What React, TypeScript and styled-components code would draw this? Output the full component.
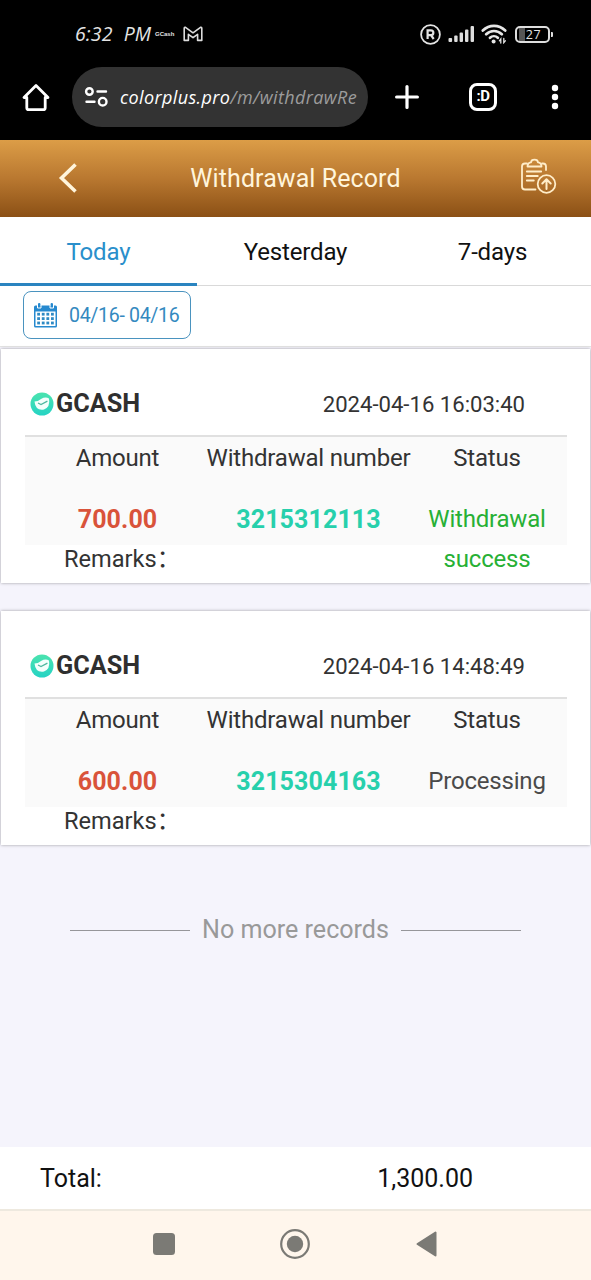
import React from "react";
import styled, { createGlobalStyle } from "styled-components";

const GlobalStyle = createGlobalStyle`
  * { box-sizing: border-box; }
  html, body { margin: 0; padding: 0; }
  body { font-family: Roboto, "Noto Sans CJK SC", sans-serif; background: #f5f4fc; }
`;

const Screen = styled.div`
  width: 591px;
  height: 1280px;
  display: flex;
  flex-direction: column;
  overflow: hidden;
  background: #f5f4fc;
  color: #333;
`;

const BrowserTop = styled.div`
  flex: none;
  height: 140px;
  background: #000;
  color: #fff;
  font-family: "Open Sans", sans-serif;
  font-style: italic;
`;

const StatusBar = styled.div`
  height: 67px;
  padding: 1px 41px 0 75px;
  display: flex;
  align-items: center;
  color: #e4e4e4;
`;

const Clock = styled.span`
  width: 80px;
  padding-bottom: 2px;
  font-size: 19.5px;
  letter-spacing: 0.1px;
  font-weight: 400;
  word-spacing: 6px;
  white-space: nowrap;
`;

const Notice = styled.span`
  width: 28px;
  font: 700 6px "Liberation Sans", sans-serif;
`;

const StatusIcons = styled.div`
  margin-left: auto;
  display: flex;
  align-items: center;
`;

const AddressRow = styled.div`
  height: 60px;
  display: flex;
  align-items: center;
  padding-left: 20px;
`;

const AddressPill = styled.div`
  width: 296px;
  height: 60px;
  margin-left: 20px;
  padding-left: 12px;
  border-radius: 30px;
  background: #333;
  display: flex;
  align-items: center;
`;

const Address = styled.span`
  margin-left: 12px;
  font-size: 18px;
  letter-spacing: 0.38px;
  white-space: nowrap;
  color: #9c9c9c;
`;

const Host = styled.span`
  color: #fff;
`;

const BrowserAction = styled.div<{ $gap: number }>`
  margin-left: ${(p) => p.$gap}px;
  display: flex;
`;

const Header = styled.header`
  flex: none;
  height: 77px;
  background: linear-gradient(#dc9d47, #b97830 50%, #8b5015);
  color: #fff5dc;
  display: grid;
  grid-template-columns: 100px 1fr 100px;
  align-items: center;
`;

const BackButton = styled.div`
  display: flex;
  padding: 0 0 2px 57px;
`;

const ExportButton = styled.div`
  display: flex;
  padding: 0 0 6px 28px;
`;

const Title = styled.h1`
  margin: 0;
  font-size: 25px;
  letter-spacing: 0.08px;
  line-height: 30px;
  font-weight: 400;
  text-align: center;
`;

const Tabs = styled.nav`
  flex: none;
  height: 69px;
  display: flex;
  background: #fff;
  border-bottom: 1px solid #d9d9d9;
`;

const Tab = styled.div<{ $active?: boolean }>`
  flex: 1;
  height: 69px;
  padding-bottom: ${(p) => (p.$active ? 0 : 3)}px;
  padding-top: 3px;
  display: flex;
  align-items: center;
  justify-content: center;
  font-size: 24px;
  letter-spacing: -0.15px;
  color: ${(p) => (p.$active ? "#2a8fcb" : "#111")};
  border-bottom: ${(p) => (p.$active ? "3px solid #2a84c0" : "none")};
`;

const FilterBar = styled.div`
  flex: none;
  height: 61px;
  padding: 5px 23px 0;
  background: #fff;
  border-bottom: 1px solid #e4e4e4;
`;

const DateButton = styled.div`
  width: 168px;
  height: 48px;
  padding-left: 10px;
  border: 1.5px solid #4a93bf;
  border-radius: 8px;
  display: flex;
  align-items: center;
  gap: 12px;
  font-size: 19.5px;
  letter-spacing: -0.3px;
  white-space: nowrap;
  color: #3489bf;
`;

const Records = styled.main`
  flex: 1;
  padding-top: 2px;
`;

const Card = styled.section`
  height: 234px;
  margin: 0 1px 28px;
  padding: 0 23px 0 24px;
  background: #fff;
  box-shadow: 0 0 3px rgba(0, 0, 0, 0.36);
`;

const CardHead = styled.div`
  height: 88px;
  padding: 23px 42px 0 5px;
  display: flex;
  align-items: center;
  border-bottom: 2px solid #e0e0e0;
`;

const Method = styled.span`
  margin: 0 0 0 2px;
  font-size: 25.3px;
  font-weight: 700;
  color: #2f2f2f;
`;

const Time = styled.span`
  margin-left: auto;
  font-size: 22.1px;
`;

const Columns = styled.div`
  height: 108px;
  background: #fafafa;
  display: grid;
  grid-template-columns: 185px 197px 160px;
  grid-template-rows: 44px 40px;
  row-gap: 18px;
  justify-items: center;
  text-align: center;
  font-size: 24px;
  letter-spacing: -0.2px;
  line-height: 40px;
`;

const Label = styled.div`
  padding-top: 1px;
  white-space: nowrap;
`;

const Value = styled.div<{ $color: string; $bold?: boolean }>`
  color: ${(p) => p.$color};
  font-weight: ${(p) => (p.$bold ? 700 : 400)};
  font-size: ${(p) => (p.$bold ? "25px" : "24px")};
  letter-spacing: ${(p) => (p.$bold ? "0.1px" : "-0.2px")};
  padding-top: ${(p) => (p.$bold ? 1 : 0)}px;
`;

const Remarks = styled.div`
  padding-left: 39px;
  font-size: 23.6px;
  line-height: 28px;
`;

const EndNote = styled.div`
  display: flex;
  align-items: center;
  justify-content: center;
  gap: 12px;
  padding-top: 42px;
  font-size: 25.1px;
  line-height: 30px;
  color: #999;
`;

const Rule = styled.span`
  width: 120px;
  height: 1px;
  margin-top: 1px;
  background: #96969a;
`;

const TotalBar = styled.footer`
  flex: none;
  height: 62px;
  padding: 0 118px 0 40px;
  display: flex;
  align-items: center;
  justify-content: space-between;
  background: #fff;
  color: #111;
  font-size: 25px;
`;

const SystemNav = styled.div`
  flex: none;
  height: 71px;
  border-top: 2px solid #eee9df;
  background: #fff6ec;
  display: flex;
  align-items: center;
  padding: 0 0 3px 153px;
  gap: 105px;
`;

const MailIcon = () => (
  <svg width="20" height="16" viewBox="0 0 20 16" fill="none" stroke="#dcdcdc" strokeWidth="1.6" strokeLinejoin="round">
    <path d="M1.2 14.4V2.4Q1.200 1 2.500 1.300L10 6.800l7.500-5.500q1.300-.3 1.300 1.100v12H14.600V8.300L10 11.700 5.400 8.300v6.100Z" />
  </svg>
);

const RegisteredIcon = () => (
  <svg width="21" height="21" viewBox="0 0 21 21" fill="none" stroke="#e4e4e4">
    <circle cx="10.5" cy="10.5" r="9.4" strokeWidth="1.8" />
    <path d="M7.6 15V6.3h3.3a2.4 2.4 0 0 1 0 4.9H7.6M11 11.2l2.7 3.8" strokeWidth="2.2" />
  </svg>
);

const SignalIcon = () => (
  <svg width="27" height="18" viewBox="0 0 27 18" fill="#dedede">
    <rect x="0.5" y="13" width="3.6" height="4" rx="1" />
    <rect x="6.2" y="10.5" width="3.4" height="6.5" rx="1" />
    <rect x="11.6" y="7.5" width="3.4" height="9.5" rx="1" />
    <rect x="17" y="4.5" width="3.4" height="12.5" rx="1" />
    <rect x="22.6" y="1" width="3.4" height="16" rx="1" />
  </svg>
);

const WifiIcon = () => (
  <svg width="26" height="20" viewBox="0 0 26 20" fill="none" stroke="#e6e6e6" strokeWidth="2.7" strokeLinecap="round">
    <path d="M1.8 6.6c6.5-6.2 15.9-6.2 22.4 0M5.2 10.3c4.4-4.4 11.2-4.4 15.6 0M9 13.8c2.2-2.1 5.6-2.1 7.8 0" />
    <circle cx="12.6" cy="17.4" r="2" fill="#e6e6e6" stroke="none" />
    <path d="M19.8 19v-4l-1.400 1.800M22.800 14.400v4.200l1.500-1.800" strokeWidth="1.3" />
  </svg>
);

const BatteryShell = styled.div`
  position: relative;
  width: 35px;
  height: 17px;
  border: 2px solid #dedede;
  border-radius: 5px;
  background: linear-gradient(90deg, transparent 2px, #555 2px, #555 8px, transparent 8px);
  font: 400 12.5px/13px "Open Sans", sans-serif;
  text-align: center;
  padding-left: 2px;
  letter-spacing: 0.6px;
  &::after {
    content: "";
    position: absolute;
    right: -5px;
    top: 4px;
    width: 2px;
    height: 5px;
    border-radius: 0 1px 1px 0;
    background: #dedede;
  }
`;

const HomeIcon = () => (
  <svg width="32" height="32" viewBox="0 0 32 32" fill="none" stroke="#fff" strokeWidth="2.8" strokeLinejoin="round" strokeLinecap="round">
    <path d="M4 16.5h2.8v10.2q0 2 2 2h14.4q2 0 2-2V16.5H28L16 4.5Z" />
  </svg>
);

const SiteInfoIcon = () => (
  <svg width="24" height="22" viewBox="0 0 24 22" fill="none" stroke="#fff" strokeWidth="2.4" strokeLinecap="round">
    <circle cx="5.4" cy="5.500" r="3.300" />
    <path d="M13.5 5.500H22M2.500 15.700h8" />
    <circle cx="18.700" cy="15.700" r="3.800" />
  </svg>
);

const PlusIcon = () => (
  <svg width="24" height="24" viewBox="0 0 24 24" stroke="#fff" strokeWidth="3.2" strokeLinecap="round">
    <path d="M12 1.6v20.8M1.6 12h20.8" />
  </svg>
);

const TabCounter = styled.div`
  width: 28px;
  height: 28px;
  border: 3px solid #fff;
  border-radius: 8px;
  font: 700 15px/21px "Liberation Sans Narrow", Roboto, sans-serif;
  letter-spacing: -0.5px;
  text-align: center;
`;

const MenuIcon = () => (
  <svg width="8" height="26" viewBox="0 0 8 26" fill="#fff">
    <circle cx="4" cy="4" r="3.2" />
    <circle cx="4" cy="13" r="3.2" />
    <circle cx="4" cy="22" r="3.2" />
  </svg>
);

const BackIcon = () => (
  <svg width="22" height="32" viewBox="0 0 22 32" fill="none" stroke="#fff5dc" strokeWidth="3.6">
    <path d="M18.500 2.500 4.500 16l14 13.500" />
  </svg>
);

const ClipboardIcon = () => (
  <svg width="38" height="38" viewBox="0 0 38 38" fill="none" stroke="#ffedc9" strokeWidth="1.8" strokeLinecap="round" strokeLinejoin="round">
    <path d="M8 6.500H6Q3 6.500 3 9.500V29.500q0 3 3 3h10.500M23 6.500h1q3 0 3 3v3.500" />
    <path d="M8.500 9.500q0-3.800 3.500-4.200C12.300 1.800 18.700 1.800 19 5.300q3.500.4 3.500 4.200Z" />
    <path d="M7.800 14.500h14.400M7.800 19h11M7.800 23.500h7" />
    <circle cx="27.500" cy="27" r="8.800" />
    <path d="M27.500 32V22.500M23.300 26.500l4.200-4.200 4.200 4.200" strokeWidth="2" />
  </svg>
);

const CalendarIcon = () => (
  <svg width="23" height="26" viewBox="0 0 23 26">
    <g transform="translate(0 1)">
      <path fill="#2689cf" d="M0 4q0-1.500 1.500-1.500H4V1q0-1 1.200-1t1.200 1v1.500h10.200V1q0-1 1.200-1T19 1v1.500h2.500Q23 2.500 23 4v19q0 1.500-1.500 1.500h-20Q0 24.500 0 23Z" />
      <path fill="#fff" d="M1.500 8.500h20v14.500h-20Z" />
      <path stroke="#fff" strokeWidth="1" fill="none" d="M3.500 2v3h3.500V2M16 2v3h3.500V2" />
      <g fill="#2f8ac4">
        {[9.8, 14.2, 18.6].map((y) =>
          [3.2, 7.8, 12.4, 17].map((x) => <rect key={`${x}-${y}`} x={x} y={y} width="2.800" height="2.800" />)
        )}
      </g>
    </g>
  </svg>
);

const VerifiedIcon = () => (
  <svg width="24" height="24" viewBox="0 0 24 24">
    <defs>
      <linearGradient id="coin" x1="0" y1="0" x2="0" y2="1">
        <stop offset="0" stopColor="#4be3ae" />
        <stop offset="1" stopColor="#25d3c4" />
      </linearGradient>
    </defs>
    <circle cx="12" cy="12" r="11.500" fill="url(#coin)" />
    <path fill="#f4fffc" d="M4.500 9.500q3.500 0 6.500-2.500 4.500-2.500 8-.5 1.500 8.500-5 11-8.500 1.500-9.500-8Z" />
    <path d="m8 11 3 1.500 6.400-3.300" fill="none" stroke="#4fb8a0" strokeWidth="1.300" />
  </svg>
);

const RecentsIcon = () => (
  <svg width="22" height="22" viewBox="0 0 22 22">
    <rect width="22" height="22" rx="3.500" fill="#7b7a75" />
  </svg>
);

const HomeNavIcon = () => (
  <svg width="30" height="30" viewBox="0 0 30 30">
    <circle cx="15" cy="15" r="13.800" fill="none" stroke="#7b7a75" strokeWidth="2.200" />
    <circle cx="15" cy="15" r="8.200" fill="#7b7a75" />
  </svg>
);

const BackNavIcon = () => (
  <svg width="22" height="28" viewBox="0 0 22 28">
    <path d="M2.500 14 20.500 2.500v23Z" fill="#7b7a75" stroke="#7b7a75" strokeWidth="2" strokeLinejoin="round" />
  </svg>
);

interface RecordItem {
  time: string;
  amount: string;
  number: string;
  status: string;
  statusColor: string;
}

const records: RecordItem[] = [
  { time: "2024-04-16 16:03:40", amount: "700.00", number: "3215312113", status: "Withdrawal success", statusColor: "#27b035" },
  { time: "2024-04-16 14:48:49", amount: "600.00", number: "3215304163", status: "Processing", statusColor: "#4a4a4a" },
];

const RecordCard = ({ item }: { item: RecordItem }) => (
  <Card>
    <CardHead>
      <VerifiedIcon />
      <Method>GCASH</Method>
      <Time>{item.time}</Time>
    </CardHead>
    <Columns>
      <Label>Amount</Label>
      <Label>Withdrawal number</Label>
      <Label>Status</Label>
      <Value $color="#d9533a" $bold>{item.amount}</Value>
      <Value $color="#27d0ac" $bold>{item.number}</Value>
      <Value $color={item.statusColor}>{item.status}</Value>
    </Columns>
    <Remarks>Remarks：</Remarks>
  </Card>
);

export default function App() {
  return (
    <Screen>
      <GlobalStyle />
      <BrowserTop>
        <StatusBar>
          <Clock>6:32 PM</Clock>
          <Notice>GCash</Notice>
          <MailIcon />
          <StatusIcons>
            <BrowserAction $gap={0}><RegisteredIcon /></BrowserAction>
            <BrowserAction $gap={7}><SignalIcon /></BrowserAction>
            <BrowserAction $gap={6}><WifiIcon /></BrowserAction>
            <BrowserAction $gap={8}><BatteryShell>27</BatteryShell></BrowserAction>
          </StatusIcons>
        </StatusBar>
        <AddressRow>
          <HomeIcon />
          <AddressPill>
            <SiteInfoIcon />
            <Address><Host>colorplus.pro</Host>/m/withdrawRe</Address>
          </AddressPill>
          <BrowserAction $gap={27}><PlusIcon /></BrowserAction>
          <BrowserAction $gap={50}><TabCounter>:D</TabCounter></BrowserAction>
          <BrowserAction $gap={54}><MenuIcon /></BrowserAction>
        </AddressRow>
      </BrowserTop>
      <Header>
        <BackButton><BackIcon /></BackButton>
        <Title>Withdrawal Record</Title>
        <ExportButton><ClipboardIcon /></ExportButton>
      </Header>
      <Tabs>
        <Tab $active>Today</Tab>
        <Tab>Yesterday</Tab>
        <Tab>7-days</Tab>
      </Tabs>
      <FilterBar>
        <DateButton><CalendarIcon />04/16- 04/16</DateButton>
      </FilterBar>
      <Records>
        {records.map((item) => <RecordCard key={item.number} item={item} />)}
        <EndNote><Rule />No more records<Rule /></EndNote>
      </Records>
      <TotalBar><span>Total:</span><span>1,300.00</span></TotalBar>
      <SystemNav><RecentsIcon /><HomeNavIcon /><BackNavIcon /></SystemNav>
    </Screen>
  );
}
